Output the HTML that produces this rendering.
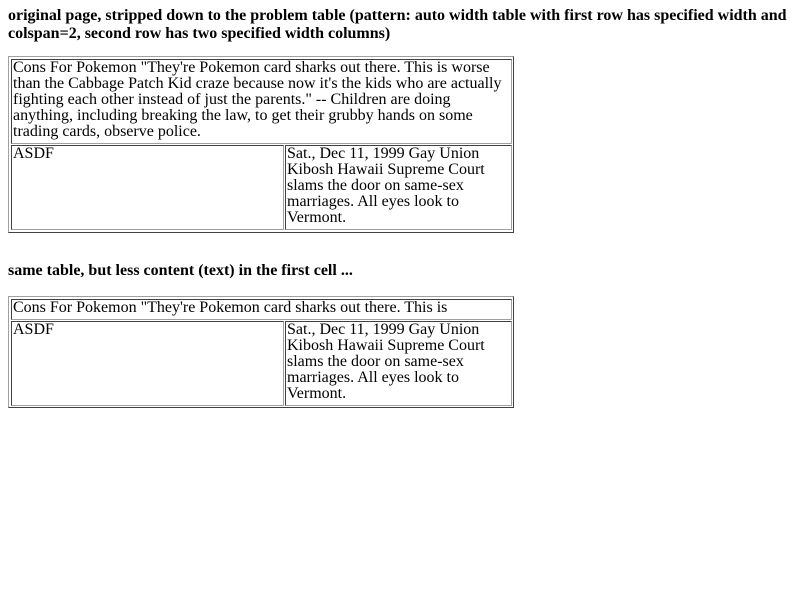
<!DOCTYPE html>
<html><head><meta charset="utf-8"><style>
body{margin:0;background:#fff;color:#000;font-family:"Liberation Serif",serif;}
.h{position:absolute;left:8px;font-weight:bold;font-size:16px;line-height:18px;white-space:nowrap;letter-spacing:0}
.b{position:absolute;box-sizing:border-box;border:1px solid;border-color:#a0a0a0 #404040 #404040 #a0a0a0}
.c{position:absolute;box-sizing:border-box;border:1px solid;border-color:#404040 #a0a0a0 #a0a0a0 #404040;padding:0 1px;font-size:16px;line-height:16px;white-space:nowrap;overflow:hidden}
</style></head><body>
<div class="h" style="top:7px">original page, stripped down to the problem table (pattern: auto width table with first row has specified width and<br>colspan=2, second row has two specified width columns)</div>
<div class="b" style="left:8px;top:56px;width:506px;height:177px"></div>
<div class="c" style="left:11px;top:59px;width:501px;height:85px">Cons For Pokemon "They're Pokemon card sharks out there. This is worse<br>than the Cabbage Patch Kid craze because now it's the kids who are actually<br>fighting each other instead of just the parents." -- Children are doing<br>anything, including breaking the law, to get their grubby hands on some<br>trading cards, observe police.</div>
<div class="c" style="left:11px;top:145px;width:273px;height:85px">ASDF</div>
<div class="c" style="left:285px;top:145px;width:227px;height:85px">Sat., Dec 11, 1999 Gay Union<br>Kibosh Hawaii Supreme Court<br>slams the door on same-sex<br>marriages. All eyes look to<br>Vermont.</div>
<div class="h" style="top:262px">same table, but less content (text) in the first cell ...</div>
<div class="b" style="left:8px;top:296px;width:506px;height:112px"></div>
<div class="c" style="left:11px;top:299px;width:501px;height:21px">Cons For Pokemon "They're Pokemon card sharks out there. This is</div>
<div class="c" style="left:11px;top:321px;width:273px;height:85px">ASDF</div>
<div class="c" style="left:285px;top:321px;width:227px;height:85px">Sat., Dec 11, 1999 Gay Union<br>Kibosh Hawaii Supreme Court<br>slams the door on same-sex<br>marriages. All eyes look to<br>Vermont.</div>
</body></html>
